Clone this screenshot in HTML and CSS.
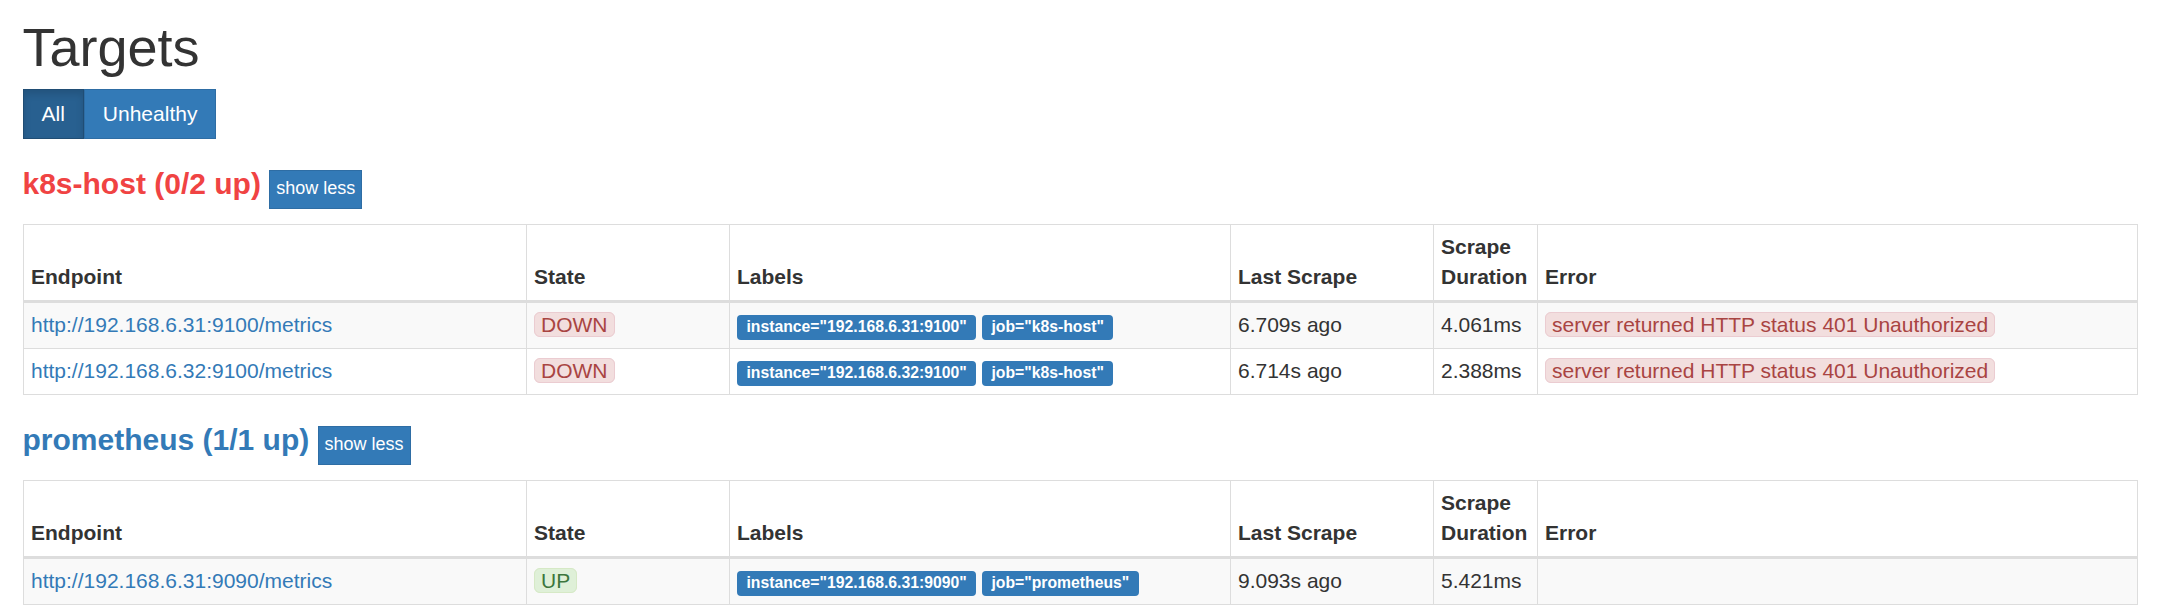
FILE: index.html
```html
<!DOCTYPE html>
<html lang="en">
<head>
<meta charset="utf-8">
<title>Prometheus Time Series Collection and Processing Server</title>
<link rel="stylesheet" href="styles.css">
</head>
<body>
<div class="page">
  <h1 class="title">Targets</h1>
  <div class="btn-group">
    <button class="btn btn-active" type="button">All</button>
    <button class="btn" type="button">Unhealthy</button>
  </div>

  <section class="job">
    <h2 class="job-head">
      <a class="job-name job-danger" href="#job-k8s-host">k8s-host (0/2 up)</a>
      <button class="btn-xs" type="button">show less</button>
    </h2>
    <table class="targets">
      <colgroup>
        <col class="c-endpoint"><col class="c-state"><col class="c-labels"><col class="c-last"><col class="c-dur"><col class="c-error">
      </colgroup>
      <thead>
        <tr><th>Endpoint</th><th>State</th><th>Labels</th><th>Last Scrape</th><th>Scrape Duration</th><th>Error</th></tr>
      </thead>
      <tbody>
        <tr>
          <td><a class="endpoint" href="#">http://192.168.6.31:9100/metrics</a></td>
          <td><span class="pill pill-down">DOWN</span></td>
          <td><span class="label">instance="192.168.6.31:9100"</span> <span class="label">job="k8s-host"</span></td>
          <td>6.709s ago</td>
          <td>4.061ms</td>
          <td><span class="pill pill-down">server returned HTTP status 401 Unauthorized</span></td>
        </tr>
        <tr>
          <td><a class="endpoint" href="#">http://192.168.6.32:9100/metrics</a></td>
          <td><span class="pill pill-down">DOWN</span></td>
          <td><span class="label">instance="192.168.6.32:9100"</span> <span class="label">job="k8s-host"</span></td>
          <td>6.714s ago</td>
          <td>2.388ms</td>
          <td><span class="pill pill-down">server returned HTTP status 401 Unauthorized</span></td>
        </tr>
      </tbody>
    </table>
  </section>

  <section class="job">
    <h2 class="job-head">
      <a class="job-name job-ok" href="#job-prometheus">prometheus (1/1 up)</a>
      <button class="btn-xs" type="button">show less</button>
    </h2>
    <table class="targets">
      <colgroup>
        <col class="c-endpoint"><col class="c-state"><col class="c-labels"><col class="c-last"><col class="c-dur"><col class="c-error">
      </colgroup>
      <thead>
        <tr><th>Endpoint</th><th>State</th><th>Labels</th><th>Last Scrape</th><th>Scrape Duration</th><th>Error</th></tr>
      </thead>
      <tbody>
        <tr>
          <td><a class="endpoint" href="#">http://192.168.6.31:9090/metrics</a></td>
          <td><span class="pill pill-up">UP</span></td>
          <td><span class="label">instance="192.168.6.31:9090"</span> <span class="label">job="prometheus"</span></td>
          <td>9.093s ago</td>
          <td>5.421ms</td>
          <td></td>
        </tr>
      </tbody>
    </table>
  </section>
</div>
</body>
</html>
```
FILE: styles.css
```css
html, body {
  margin: 0;
  padding: 0;
  background: #fff;
}

body {
  font-family: "Liberation Sans", Arial, Helvetica, sans-serif;
  font-size: 21px;
  line-height: 30px;
  color: #333;
}

.page {
  padding: 17.5px 22.5px 0;
}

.title {
  margin: 0 0 12.4px;
  font-size: 54px;
  line-height: 59.4px;
  font-weight: normal;
  color: #333;
}

.btn-group {
  display: flex;
}

.btn {
  font-family: inherit;
  font-size: 21px;
  line-height: 30px;
  padding: 9px 18px;
  margin: 0;
  border: 1px solid #2e6da4;
  border-radius: 0;
  background: #337ab7;
  color: #fff;
  cursor: pointer;
}

.btn-active {
  background: #286090;
  border-color: #204d74;
  box-shadow: inset 0 4.5px 7.5px rgba(0, 0, 0, 0.125);
}

.job-head {
  display: flex;
  align-items: baseline;
  gap: 8.3px;
  margin: 29.5px 0 14.5px;
  font-size: 30px;
  line-height: 30px;
  font-weight: bold;
}

.job-name {
  text-decoration: none;
}

.job-danger {
  color: #f04343;
}

.job-ok {
  color: #337ab7;
}

.btn-xs {
  font-family: inherit;
  font-size: 18px;
  line-height: 27px;
  font-weight: normal;
  padding: 3.5px 6px 6.5px;
  margin: 0;
  border: 1px solid #2e6da4;
  border-radius: 0;
  background: #337ab7;
  color: #fff;
  cursor: pointer;
}

.targets {
  width: 100%;
  table-layout: fixed;
  border-collapse: collapse;
  border: 1px solid #ddd;
  margin: 0 0 30px;
}

.c-endpoint { width: 503px; }
.c-state { width: 203px; }
.c-labels { width: 501px; }
.c-last { width: 203px; }
.c-dur { width: 104px; }

.targets th,
.targets td {
  padding: 7.5px;
  border: 1px solid #ddd;
  text-align: left;
  line-height: 30px;
}

.targets th {
  vertical-align: bottom;
  font-weight: bold;
  border-bottom: 3px solid #ddd;
}

.targets td {
  vertical-align: top;
  white-space: nowrap;
}

.targets tbody tr:nth-child(odd) {
  background: #f9f9f9;
}

.endpoint {
  color: #337ab7;
  text-decoration: none;
}

.pill {
  padding: 0 6px;
  border: 1px solid transparent;
  border-radius: 6px;
}

.pill-down {
  background: #f2dede;
  border-color: #ebccd1;
  color: #a94442;
}

.pill-up {
  background: #dff0d8;
  border-color: #d6e9c6;
  color: #3c763d;
}

.label {
  display: inline;
  padding: 0.2em 0.6em 0.3em;
  font-size: 15.75px;
  font-weight: bold;
  line-height: 1;
  color: #fff;
  background: #337ab7;
  border-radius: 0.25em;
  white-space: nowrap;
}
```
